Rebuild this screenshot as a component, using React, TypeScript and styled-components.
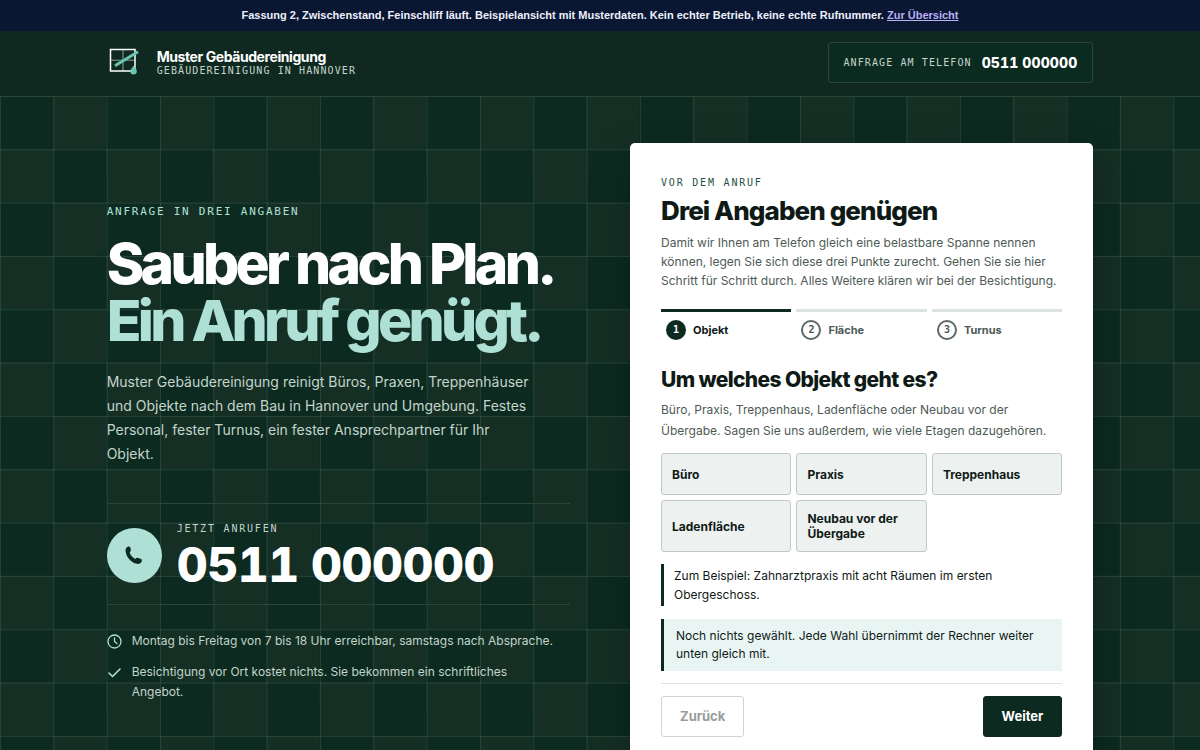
import React, { useState } from "react";
import styled, { createGlobalStyle } from "styled-components";

const sans = `Inter, "Liberation Sans", sans-serif`;
const mono = `"DejaVu Sans Mono", "Liberation Mono", monospace`;

const color = {
  ink: "#0f1a16",
  pine: "#0c2a20",
  pineLight: "#152f25",
  mint: "#aee0d6",
  mist: "#c3d5cb",
  line: "#2b4639",
  grey: "#4d5a55",
};

const GlobalStyle = createGlobalStyle`
  *, *::before, *::after { box-sizing: border-box; }
  :root { --tile: calc(100vw / 22.5); }
  body {
    margin: 0;
    background: ${color.pine};
    color: ${color.ink};
    font-family: ${sans};
    -webkit-font-smoothing: antialiased;
    overflow-x: hidden;
  }
  h1, h2, h3, p, ul, ol { margin: 0; padding: 0; }
  ul, ol { list-style: none; }
  button { font: inherit; color: inherit; cursor: pointer; }
  a { color: inherit; }
`;

const Notice = styled.p`
  padding: 8px 16px;
  background: #0a1733;
  color: #eef0fb;
  font: 700 11px/15px "Liberation Sans", Arial, sans-serif;
  text-align: center;

  a { color: #b9b0f5; }
`;

const Header = styled.header`
  display: flex;
  align-items: center;
  justify-content: space-between;
  padding: 11px calc(var(--tile) * 2) 13px;
  background: #0f2920;
  border-bottom: 1px solid ${color.line};
`;

const Brand = styled.a`
  display: flex;
  align-items: center;
  gap: 16px;
  text-decoration: none;

  svg { display: block; }
`;

const BrandName = styled.strong`
  display: block;
  color: #fff;
  font-size: 14px;
  font-weight: 700;
  letter-spacing: -0.03em;
  line-height: 16px;
`;

const Label = styled.span<{ $size?: number; $track?: string; $tone?: string; $leading?: number }>`
  display: block;
  color: ${(p) => p.$tone ?? color.mist};
  font-family: ${mono};
  font-size: ${(p) => p.$size ?? 10}px;
  letter-spacing: ${(p) => p.$track ?? "0.18em"};
  line-height: ${(p) => p.$leading ?? 16}px;
  text-transform: uppercase;
`;

const HeaderPhone = styled.a`
  display: flex;
  align-items: center;
  gap: 10px;
  padding: 10px 15px;
  background: #0b2a20;
  border: 1px solid ${color.line};
  border-radius: 3px;
  text-decoration: none;

  strong {
    color: #fff;
    font-size: 14px;
    font-weight: 800;
    letter-spacing: 0.01em;
    line-height: 19px;
    font-variant-numeric: tabular-nums;
  }
`;

const Hero = styled.main`
  display: grid;
  grid-template-columns: 1fr 1fr;
  align-items: center;
  gap: 60px;
  padding: 46px calc(var(--tile) * 2);
  background-color: ${color.pine};
  background-image:
    linear-gradient(to right, rgba(120, 160, 140, 0.2) 1px, transparent 1px),
    linear-gradient(to bottom, rgba(120, 160, 140, 0.2) 1px, transparent 1px),
    conic-gradient(
      transparent 0 25%,
      ${color.pineLight} 0 50%,
      transparent 0 75%,
      ${color.pineLight} 0
    );
  background-size:
    var(--tile) var(--tile),
    var(--tile) var(--tile),
    calc(var(--tile) * 2) calc(var(--tile) * 2);
  background-position: 0 -1px, 0 -1px, var(--tile) -1px;
`;

const Headline = styled.h1`
  margin-top: 15px;
  color: #fff;
  font-size: 57px;
  font-weight: 800;
  letter-spacing: -0.065em;
  line-height: 57px;

  span {
    display: block;
    color: ${color.mint};
  }
`;

const Lead = styled.p`
  margin-top: 21px;
  max-width: 430px;
  color: ${color.mist};
  font-size: 14px;
  line-height: 24px;
`;

const CallPanel = styled.a`
  display: flex;
  align-items: center;
  gap: 15px;
  margin-top: 37px;
  padding: 17px 0 15px;
  border-block: 1px solid ${color.line};
  text-decoration: none;
`;

const CallBadge = styled.span`
  display: grid;
  place-items: center;
  width: 55px;
  height: 55px;
  border-radius: 50%;
  background: ${color.mint};
  color: ${color.pine};
`;

const CallNumber = styled.strong`
  display: block;
  margin-top: 4px;
  color: #fff;
  font-size: 48px;
  font-weight: 800;
  letter-spacing: -0.01em;
  line-height: 48px;
  font-variant-numeric: tabular-nums;
`;

const Facts = styled.ul`
  display: grid;
  gap: 11px;
  margin-top: 26px;
`;

const Fact = styled.li`
  display: grid;
  grid-template-columns: 15px 1fr;
  gap: 10px;
  color: ${color.mist};
  font-size: 12px;
  line-height: 20px;

  svg {
    margin-top: 3px;
    color: ${color.mint};
  }
`;

const Card = styled.section`
  padding: 32px 31px 26px;
  background: #fff;
  border-radius: 5px;
  box-shadow: 0 16px 40px rgba(0, 0, 0, 0.25);
`;

const CardTitle = styled.h2`
  margin-top: 4px;
  font-size: 26px;
  font-weight: 800;
  letter-spacing: -0.035em;
  line-height: 32px;
`;

const CardText = styled.p<{ $leading?: number }>`
  margin-top: 6px;
  color: ${color.grey};
  font-size: 12px;
  line-height: ${(p) => p.$leading ?? 19}px;
`;

const Steps = styled.ol`
  display: grid;
  grid-template-columns: repeat(3, 1fr);
  gap: 5px;
  margin-top: 19px;
`;

const Step = styled.li<{ $active: boolean }>`
  display: flex;
  align-items: center;
  gap: 7px;
  padding: 8px 5px;
  border-top: 3px solid ${(p) => (p.$active ? color.pine : "#dde3e0")};
  color: ${(p) => (p.$active ? color.ink : color.grey)};
  font-size: 11px;
  font-weight: 700;
  line-height: 20px;

  span {
    display: grid;
    place-items: center;
    width: 20px;
    height: 20px;
    border: 2px solid ${(p) => (p.$active ? color.pine : "#5d6965")};
    border-radius: 50%;
    background: ${(p) => (p.$active ? color.pine : "transparent")};
    color: ${(p) => (p.$active ? "#fff" : color.grey)};
    font-family: ${mono};
    font-size: 10px;
    line-height: 1;
  }
`;

const Question = styled.h3`
  margin-top: 19px;
  font-size: 21px;
  font-weight: 800;
  letter-spacing: -0.03em;
  line-height: 26px;
`;

const Choices = styled.div`
  display: grid;
  grid-template-columns: repeat(3, 1fr);
  gap: 5px;
  margin-top: 12px;
`;

const Choice = styled.button`
  min-height: 42px;
  padding: 10px;
  background: #edf1f0;
  border: 1px solid #c0c9c6;
  border-radius: 3px;
  color: ${color.ink};
  font-size: 12px;
  font-weight: 700;
  line-height: 15px;
  text-align: left;
`;

const Example = styled.p`
  margin-top: 12px;
  padding: 2px 10px;
  border-left: 3px solid ${color.pine};
  font-size: 12px;
  line-height: 19px;
`;

const Status = styled.output`
  display: block;
  margin-top: 13px;
  padding: 8px 12px;
  background: #e9f5f3;
  border-left: 3px solid ${color.pine};
  font-size: 12px;
  line-height: 18px;
`;

const Actions = styled.div`
  display: flex;
  justify-content: space-between;
  margin-top: 12px;
  padding-top: 12px;
  border-top: 1px solid #dde3e0;
`;

const Action = styled.button<{ $primary?: boolean }>`
  padding: 11px 18px;
  background: ${(p) => (p.$primary ? color.pine : "#fff")};
  border: 1px solid ${(p) => (p.$primary ? color.pine : "#cfd3d1")};
  border-radius: 3px;
  color: ${(p) => (p.$primary ? "#fff" : "#989d9b")};
  font-size: 13px;
  font-weight: 700;
  line-height: 17px;
`;

function Logo() {
  return (
    <svg width="34" height="34" viewBox="0 0 34 34" fill="none" aria-hidden="true">
      <path d="M16 3.5V25M3.5 14.2H28" stroke="#8ba297" strokeWidth="1" />
      <path d="M3.5 3.5H28V25H3.5Z" stroke="#fff" strokeWidth="1.5" />
      <path d="M8 19.8L31 5.8" stroke="#6cc3b2" strokeWidth="3" />
      <path d="M26.6 19.8C28.2 21.8 29.8 23 29.8 25.2A3.2 3.2 0 0 1 23.400 25.200C23.400 23 25.200 21.800 26.600 19.800Z" fill="#6cc3b2" />
    </svg>
  );
}

function PhoneIcon() {
  return (
    <svg width="18" height="19" viewBox="0 0 18 19" fill="currentColor" aria-hidden="true">
      <path d="M3.2 0.6C4.6 0.1 5.4 1 5.6 2.4L5.8 4.3C5.9 5.4 5 5.9 4.7 6.6C5.4 9.2 7.6 11.6 10.4 12.9C11.2 12.3 12 11.6 13 11.9L15.6 12.8C17 13.4 17.2 14.6 16.6 15.8C15.6 17.8 13.4 18.4 11 17.6C5.6 15.8 1.4 11.2 0.6 5.4C0.3 3.2 1.2 1.2 3.2 0.6Z" />
    </svg>
  );
}

function ClockIcon() {
  return (
    <svg width="15" height="15" viewBox="0 0 15 15" fill="none" stroke="currentColor" strokeWidth="1.3" strokeLinecap="round" strokeLinejoin="round" aria-hidden="true">
      <circle cx="7.5" cy="7.5" r="6.5" />
      <path d="M7.5 3.8V7.5L10 9.5" />
    </svg>
  );
}

function CheckIcon() {
  return (
    <svg width="15" height="15" viewBox="0 0 15 15" fill="none" stroke="currentColor" strokeWidth="1.6" strokeLinecap="round" strokeLinejoin="round" aria-hidden="true">
      <path d="M2 8L5.5 11.5L13 4" />
    </svg>
  );
}

const steps = ["Objekt", "Fläche", "Turnus"];
const objects = ["Büro", "Praxis", "Treppenhaus", "Ladenfläche", "Neubau vor der Übergabe"];

export default function App() {
  const [choice, setChoice] = useState<string | null>(null);

  return (
    <>
      <GlobalStyle />
      <Notice>
        Fassung 2, Zwischenstand, Feinschliff läuft. Beispielansicht mit Musterdaten. Kein echter Betrieb, keine echte
        Rufnummer. <a href="#uebersicht">Zur Übersicht</a>
      </Notice>
      <Header>
        <Brand href="#start">
          <Logo />
          <span>
            <BrandName>Muster Gebäudereinigung</BrandName>
            <Label $track="0.11em" $leading={12}>Gebäudereinigung in Hannover</Label>
          </span>
        </Brand>
        <HeaderPhone href="tel:0511000000">
          <Label $track="0.11em">Anfrage am Telefon</Label>
          <strong>0511 000000</strong>
        </HeaderPhone>
      </Header>
      <Hero>
        <div>
          <Label $size={11} $track="0.16em" $tone={color.mint}>Anfrage in drei Angaben</Label>
          <Headline>
            Sauber nach Plan.
            <span>Ein Anruf genügt.</span>
          </Headline>
          <Lead>
            Muster Gebäudereinigung reinigt Büros, Praxen, Treppenhäuser und Objekte nach dem Bau in Hannover und
            Umgebung. Festes Personal, fester Turnus, ein fester Ansprechpartner für Ihr Objekt.
          </Lead>
          <CallPanel href="tel:0511000000">
            <CallBadge>
              <PhoneIcon />
            </CallBadge>
            <span>
              <Label>Jetzt anrufen</Label>
              <CallNumber>0511 000000</CallNumber>
            </span>
          </CallPanel>
          <Facts>
            <Fact>
              <ClockIcon />
              <span>Montag bis Freitag von 7 bis 18 Uhr erreichbar, samstags nach Absprache.</span>
            </Fact>
            <Fact>
              <CheckIcon />
              <span>
                Besichtigung vor Ort kostet nichts. Sie bekommen ein schriftliches
                <br />
                Angebot.
              </span>
            </Fact>
          </Facts>
        </div>
        <Card>
          <Label $tone="#1d5144">Vor dem Anruf</Label>
          <CardTitle>Drei Angaben genügen</CardTitle>
          <CardText>
            Damit wir Ihnen am Telefon gleich eine belastbare Spanne nennen können, legen Sie sich diese drei Punkte
            zurecht. Gehen Sie sie hier Schritt für Schritt durch. Alles Weitere klären wir bei der Besichtigung.
          </CardText>
          <Steps>
            {steps.map((step, i) => (
              <Step key={step} $active={i === 0}>
                <span>{i + 1}</span>
                {step}
              </Step>
            ))}
          </Steps>
          <Question>Um welches Objekt geht es?</Question>
          <CardText $leading={21}>
            Büro, Praxis, Treppenhaus, Ladenfläche oder Neubau vor der Übergabe. Sagen Sie uns außerdem, wie viele
            Etagen dazugehören.
          </CardText>
          <Choices>
            {objects.map((name) => (
              <Choice key={name} type="button" aria-pressed={choice === name} onClick={() => setChoice(name)}>
                {name}
              </Choice>
            ))}
          </Choices>
          <Example>Zum Beispiel: Zahnarztpraxis mit acht Räumen im ersten Obergeschoss.</Example>
          <Status>
            {choice
              ? `Gewählt: ${choice}.`
              : "Noch nichts gewählt. Jede Wahl übernimmt der Rechner weiter unten gleich mit."}
          </Status>
          <Actions>
            <Action type="button" disabled>Zurück</Action>
            <Action type="button" $primary>Weiter</Action>
          </Actions>
        </Card>
      </Hero>
    </>
  );
}
